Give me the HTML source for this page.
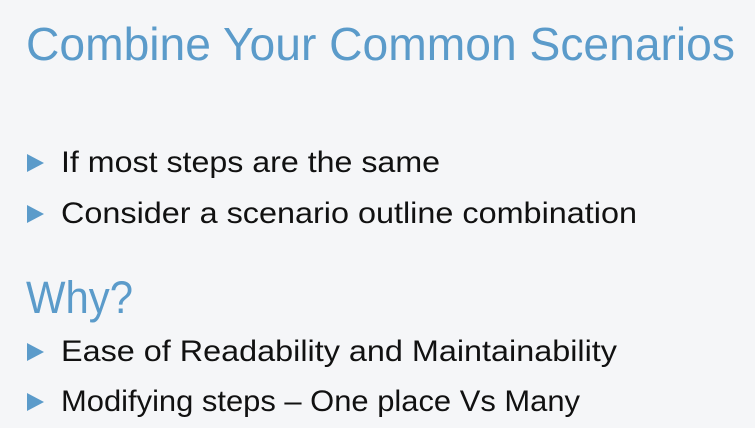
<!DOCTYPE html>
<html><head><style>
html,body{margin:0;padding:0;background:#f5f6f8;}
svg{display:block}
</style></head><body>
<svg width="755" height="428" viewBox="0 0 755 428" xmlns="http://www.w3.org/2000/svg">
<rect width="755" height="428" fill="#f5f6f8"/>
<g font-family="Liberation Sans, sans-serif">
<text x="26" y="60" font-size="46" fill="#5b9bca" textLength="709" lengthAdjust="spacingAndGlyphs">Combine Your Common Scenarios</text>
<text x="26" y="313" font-size="45" fill="#5b9bca" textLength="107" lengthAdjust="spacingAndGlyphs">Why?</text>
<g font-size="30" fill="#111">
<text x="61" y="172" textLength="379" lengthAdjust="spacingAndGlyphs">If most steps are the same</text>
<text x="61" y="223" textLength="576" lengthAdjust="spacingAndGlyphs">Consider a scenario outline combination</text>
<text x="61" y="361" textLength="556" lengthAdjust="spacingAndGlyphs">Ease of Readability and Maintainability</text>
<text x="61" y="411" textLength="519" lengthAdjust="spacingAndGlyphs">Modifying steps – One place Vs Many</text>
</g>
</g>
<g fill="#5b9bca">
<polygon points="27,154 44,163 27,172"/>
<polygon points="27,205 44,214 27,223"/>
<polygon points="27,343 44,352 27,361"/>
<polygon points="27,393 44,402 27,411"/>
</g>
</svg>
</body></html>
